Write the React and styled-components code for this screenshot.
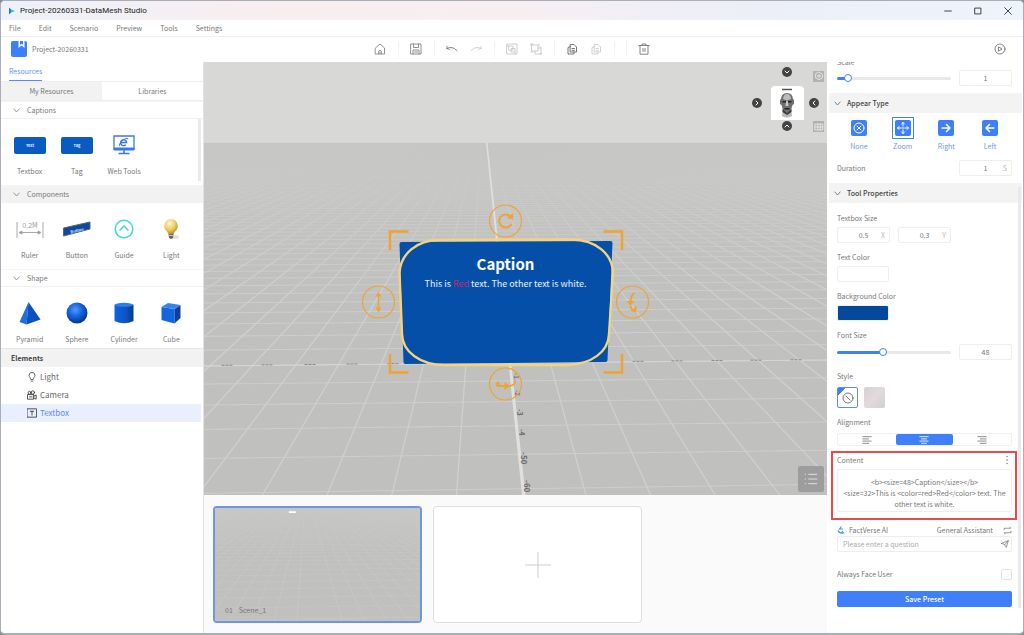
import React, {useState} from 'react'
import styled, {createGlobalStyle, css} from 'styled-components'

const range = (from, to) => Array.from({length: to - from + 1}, (_, i) => from + i)

const App = () => {
  return (
    <>
      <GlobalStyle />
      <Window>
        <TitleBar>
          <AppMark />
          <h1>Project-20260331-DataMesh Studio</h1>
          <WindowButtons>
            <button aria-label='Minimize'><Icon d='M2 6H10' size={10} color='#222' /></button>
            <button aria-label='Maximize'><Icon d='M2.5 2.5H9.5V9.5H2.5Z' size={10} color='#222' /></button>
            <button aria-label='Close'><Icon d='M2 2L10 10M10 2L2 10' size={10} color='#222' /></button>
          </WindowButtons>
        </TitleBar>
        <MenuBar>
          {['File', 'Edit', 'Scenario', 'Preview', 'Tools', 'Settings'].map(name => (
            <button key={name}>{name}</button>
          ))}
        </MenuBar>
        <Toolbar />
        <Body>
          <Sidebar />
          <Center>
            <Viewport />
            <SceneStrip />
          </Center>
          <Properties />
        </Body>
      </Window>
    </>
  )
}

const Icon = ({d, size = 12, color = '#777', fill = 'none', width = 1, children}) => (
  <svg width={size} height={size} viewBox='0 0 12 12' fill={fill} stroke={color} strokeWidth={width} strokeLinejoin='round' strokeLinecap='round' aria-hidden='true'>
    {d && <path d={d} />}
    {children}
  </svg>
)

const AppMark = () => (
  <svg width='8' height='8' viewBox='0 0 8 8' aria-hidden='true'>
    <path d='M1 0.5L3.2 2.6V5.4L1 7.5Z' fill='#1f7fc4' />
    <path d='M3.2 2.6L7 4L3.2 5.6Z' fill='#35c0c8' />
  </svg>
)

/* ---------- toolbar ---------- */

const Toolbar = () => (
  <ToolRow>
    <Project>
      <svg width='16' height='16' viewBox='0 0 16 16' aria-hidden='true'>
        <rect width='16' height='16' rx='2' fill='#3b7ffb' />
        <path d='M7.5 0H13.5V7L10.5 4.6L7.5 7Z' fill='#fff' />
        <path d='M9 0H12V3.8L10.5 2.7L9 3.8Z' fill='#3b7ffb' />
      </svg>
      Project-20260331
    </Project>
    <Tools>
      <button aria-label='Home'>
        <Icon d='M1.5 5L6 1L10.5 5V11H1.5ZM4.7 11V8Q6 6.6 7.3 8V11M6 9.3V10' width={0.8} />
      </button>
      <i />
      <button aria-label='Save'>
        <Icon d='M1 1H11V11H1ZM3.5 1V4.5H8.5V1M3 11V7H9V11M4.5 9H7.5' width={0.8} />
      </button>
      <i />
      <button aria-label='Undo'>
        <Icon d='M1 5.5Q6 2.500 11 7.500M1 5.5V3.500M1 5.5L3.400 6.3' width={0.9} />
      </button>
      <button aria-label='Redo' disabled>
        <Icon d='M11 5.5Q6 2.500 1 7.500M11 5.5V3.500M11 5.5L8.600 6.3' color='#ccc' width={0.9} />
      </button>
      <i />
      <button aria-label='Group' disabled>
        <Icon d='M1 1H11V11H1ZM3 3H7V7H3ZM5.5 5.5H9V9H5.5ZM1 3H3M9 11V9' color='#c2c2c2' width={0.8} />
      </button>
      <button aria-label='Ungroup' disabled>
        <Icon d='M2 2H8V8H2ZM8 5H11V11H5V8M1 1V3M1 1H3M9 1V3M1 9H3M11 4V5M12 11H10' color='#c2c2c2' width={0.8} />
      </button>
      <i />
      <button aria-label='Copy'>
        <Icon d='M4.500 1.500H8L10.5 4V9H4.500ZM4.500 3.500L2 4.500V11H8V9M6 5.500H8.5M6 7.300H8.5' color='#666' width={0.9} />
      </button>
      <button aria-label='Paste' disabled>
        <Icon d='M4.500 1.500H8L10.5 4V9H4.500ZM4.500 3.500L2 4.500V11H8V9M6 5.500H8.5M6 7.300H8.5' color='#ccc' width={0.9} />
      </button>
      <i />
      <i />
      <button aria-label='Delete'>
        <Icon d='M0.8 2.5H11.2M4 2.5V1H8V2.5M2 2.5V11.2H10V2.5M5 5.5V8.5M7 5.5V8.5' width={0.9} />
      </button>
    </Tools>
    <Play aria-label='Play'>
      <Icon color='#666' width={0.8}>
        <circle cx='6' cy='6' r='5' />
        <path d='M4.8 4L8 6L4.8 8Z' />
      </Icon>
    </Play>
  </ToolRow>
)

/* ---------- left column ---------- */

const Chevron = ({color = '#777'}) => <Icon d='M2.5 4L6 8L9.5 4' size={9} color={color} />

const Plate = ({text}) => (
  <svg width='32' height='17' viewBox='0 0 32 17' aria-hidden='true'>
    <rect width='32' height='17' rx='2' fill='#0a5bc0' />
    <text x='16' y='10' fontSize='4' fontWeight='bold' textAnchor='middle' fill='#dbe9ff'>{text}</text>
  </svg>
)

const captions = [
  ['Textbox', <Plate text='Text' />],
  ['Tag', <Plate text='Tag' />],
  ['Web Tools', (
    <svg width='22' height='20' viewBox='0 0 22 20' fill='none' stroke='#3a78ea'>
      <path d='M1 1H21V14H1Z' strokeWidth='1.3' />
      <path d='M1 13H21V15H1Z' fill='#3a78ea' />
      <path d='M11 15V18M5.500 18.500H16.500' strokeWidth='1.6' />
      <path d='M8 7.500H13.600A3 3 0 1 0 12.800 9.700' strokeWidth='1.4' />
      <path d='M7.200 10.500C5.500 11.500 6 9 9 6C12 3.200 15.500 2.500 14.800 4.500' strokeWidth='1' />
    </svg>
  )],
]

const components = [
  ['Ruler', (
    <svg width='28' height='18' viewBox='0 0 28 18' stroke='#aaa' fill='none'>
      <path d='M1 2V18M27 2V18M3 12.500H25' />
      <path d='M3 12.500L6 11V14ZM25 12.500L22 11V14Z' fill='#888' />
      <text x='14' y='8' fontSize='7' textAnchor='middle' fill='#999' stroke='none'>0.2M</text>
    </svg>
  )],
  ['Button', (
    <svg width='28' height='16' viewBox='0 0 28 16'>
      <path d='M0.500 7L27 1V8L0.500 15Z' fill='#0c4aa0' stroke='#5c6470' />
      <text x='14' y='11' fontSize='4' fontWeight='bold' textAnchor='middle' fill='#cfe0ff' transform='rotate(-13 14 9)'>Button</text>
    </svg>
  )],
  ['Guide', (
    <svg width='20' height='20' viewBox='0 0 20 20' fill='none' stroke='#3fd9cd'>
      <circle cx='10' cy='10' r='8.800' strokeWidth='1.5' />
      <path d='M5.500 11.500L10 7L14.500 11.500' strokeWidth='1.5' />
    </svg>
  )],
  ['Light', (
    <svg width='18' height='22' viewBox='0 0 18 22'>
      <defs>
        <radialGradient id='bulb' cx='0.4' cy='0.3' r='0.7'>
          <stop offset='0' stopColor='#fff6c8' />
          <stop offset='0.6' stopColor='#eacb62' />
          <stop offset='1' stopColor='#b98f2c' />
        </radialGradient>
      </defs>
      <ellipse cx='12' cy='19' rx='5' ry='2' fill='#e4e0d4' />
      <path d='M9 1A7 7 0 0 0 5 13.500L6.500 16H11.500L13 13.500A7 7 0 0 0 9 1Z' fill='url(#bulb)' />
      <path d='M6.500 16H11.500L11 20L9 21L7 20Z' fill='#6d675c' />
      <path d='M6.500 17.500H11.500' stroke='#c8c2b2' />
    </svg>
  )],
]

const shapes = [
  ['Pyramid', (
    <svg width='22' height='24' viewBox='0 0 22 24'>
      <path d='M9.500 1L0.500 21L7.500 23.500Z' fill='#1f6fe0' />
      <path d='M9.500 1L7.500 23.500L21.500 18.500Z' fill='#0b52c0' />
    </svg>
  )],
  ['Sphere', (
    <svg width='22' height='22' viewBox='0 0 22 22'>
      <defs>
        <radialGradient id='ball' cx='0.42' cy='0.35' r='0.62'>
          <stop offset='0' stopColor='#4d9bff' />
          <stop offset='0.55' stopColor='#1161dc' />
          <stop offset='1' stopColor='#083a90' />
        </radialGradient>
      </defs>
      <circle cx='11' cy='11' r='10.500' fill='url(#ball)' />
    </svg>
  )],
  ['Cylinder', (
    <svg width='20' height='22' viewBox='0 0 20 22'>
      <defs>
        <linearGradient id='tube'>
          <stop offset='0' stopColor='#1163dc' />
          <stop offset='0.6' stopColor='#0d54c4' />
          <stop offset='1' stopColor='#083a8c' />
        </linearGradient>
      </defs>
      <path d='M0.500 3V19Q10 23.500 19.500 19V3Z' fill='url(#tube)' />
      <ellipse cx='10' cy='2.800' rx='9.500' ry='2' fill='#2b7df0' />
    </svg>
  )],
  ['Cube', (
    <svg width='20' height='22' viewBox='0 0 20 22'>
      <path d='M0.500 5L13.500 7V21.500L0.500 18Z' fill='#1465de' />
      <path d='M13.500 7L19.500 3V16L13.500 21.500Z' fill='#0a419c' />
      <path d='M0.500 5L7 1L19.500 3L13.500 7Z' fill='#3384f2' />
    </svg>
  )],
]

const elements = [
  ['Light', <Icon size={10} color='#444' d='M4.500 8.500C4.500 7 2.500 6.500 2.500 4A3.500 3.500 0 0 1 9.500 4C9.500 6.500 7.500 7 7.500 8.500ZM5 11H7' />],
  ['Camera', (
    <Icon size={10} color='#333'>
      <path d='M1 5.500H8V11H1ZM8 7.500L11 6V11L8 9.500M3 8.200H6' />
      <circle cx='3' cy='3.300' r='1.700' />
      <circle cx='7' cy='3' r='2' />
    </Icon>
  )],
  ['Textbox', <Icon size={10} color='#333' d='M0.500 1H11.500V11H0.500ZM4 4H8M6 4V8.500' />],
]

const Section = ({title, items, shaded, compact}) => (
  <section>
    <SectionHead $shaded={shaded}><Chevron />{title}</SectionHead>
    <ItemGrid $compact={compact}>
      {items.map(([name, art]) => (
        <Item key={name}>
          <span>{art}</span>
          {name}
        </Item>
      ))}
    </ItemGrid>
  </section>
)

const Sidebar = () => {
  const [selected, setSelected] = useState('Textbox')

  return (
    <Left>
      <PanelTab><button>Resources</button></PanelTab>
      <Tabs role='tablist'>
        <Tab role='tab' aria-selected='true' $active>My Resources</Tab>
        <Tab role='tab' aria-selected='false'>Libraries</Tab>
      </Tabs>
      <Library>
        <Section title='Captions' items={captions} />
        <Section title='Components' items={components} shaded />
        <Section title='Shape' items={shapes} compact />
        <Thumb $top={18} $length={62} />
      </Library>
      <TreeHead>Elements</TreeHead>
      <Tree>
        {elements.map(([name, icon]) => (
          <li key={name}>
            <TreeRow $active={name === selected} onClick={() => setSelected(name)}>{icon}{name}</TreeRow>
          </li>
        ))}
      </Tree>
    </Left>
  )
}

/* ---------- 3D view ---------- */

// floor grid seen in perspective, the eye line is above the far edge
const VP = {x: 280, y: 54}
const floorY = n => VP.y + 1 / (0.004 + 0.00027 * n)
const rows = range(-6, 70).map(floorY)
const cols = range(-62, 72).filter(k => k !== 0).map(k => 317.7 + 64.7 * k)
const marks = [[312, 315, '-1'], [313, 332, '-2'], [315, 351, '-3'], [317, 371, '-4'], [319, 394, '-50'], [322, 422, '-60']]
const axisMarks = [24, 64, 107, 149, 190, 435, 474, 514, 553, 593]

const Floor = ({id}) => (
  <g>
    <defs>
      <linearGradient id={id} x1='0' y1='0' x2='0' y2='1'>
        <stop offset='0' stopColor='#c6c6c5' />
        <stop offset='0.12' stopColor='#c6c6c5' stopOpacity='0.7' />
        <stop offset='0.45' stopColor='#c4c4c3' stopOpacity='0' />
      </linearGradient>
      <clipPath id={id + 'clip'}><rect y='81' width='624' height='353' /></clipPath>
    </defs>
    <rect width='624' height='434' fill='#d8d8d7' />
    <rect y='81' width='624' height='353' fill='#c0c0bf' />
    <g clipPath={`url(#${id}clip)`} stroke='#d0d0cf'>
      {cols.map(x => <path key={x} d={`M${VP.x} ${VP.y}L${x} 433`} strokeWidth='1.2' />)}
      {rows.map(y => <path key={y} d={`M0 ${y}L624 ${y - (y - VP.y) * 0.024}`} strokeWidth='0.8' />)}
      <rect y='81' width='624' height='353' fill={`url(#${id})`} stroke='none' />
    </g>
  </g>
)

const Handle = ({x, y, children}) => (
  <g transform={`translate(${x} ${y})`} fill='none' stroke='#f0a32f' strokeWidth='1.2'>
    <circle r='16' />
    {children}
  </g>
)

const Viewport = () => (
  <View>
    <Canvas viewBox='0 0 624 433' preserveAspectRatio='xMidYMid slice' role='img' aria-label='Scene view'>
      <Floor id='far' />
      <path d='M282.500 81L284 81L322 433H318.500Z' fill='#e0e0df' />
      <path d='M0 304L624 298' stroke='#d6d6d5' />
      {axisMarks.map(x => (
        <path key={x} d={`M${x - 6} ${303.500 - x * 0.0096}H${x + 6}`} stroke='#8a8a8a' strokeWidth='1' strokeDasharray='3 1' />
      ))}
      {marks.map(([x, y, label], i) => (
        <text key={label} transform={`translate(${x - 2} ${y - 4}) rotate(90)`} fontSize={6 + Math.floor(i / 2)} fontWeight='bold' fill='#6d6d6d'>{label}</text>
      ))}
      <path d='M198 180L407 179Q409 179 409 181L404 298Q404 300 402 300L202 302Q200 302 200 300L196 182Q196 180 198 180Z' fill='#064fa8' />
      <path
        d='M236 178L368 177.500C393 178 409 192 409.500 211L405.500 272C405 290 388 302 364 303H241C217 303 199 290 198.500 272L196 211C197 192 213 178 236 178Z'
        fill='none' stroke='#f5d27c' strokeWidth='2.4'
      />
      <text x='302' y='208' fontSize='15' fontWeight='bold' textAnchor='middle' fill='#fff'>Caption</text>
      <text x='302' y='225' fontSize='9' textAnchor='middle' fill='#eaf1ff'>
        This is <tspan fill='#c4286c'>Red</tspan> text. The other text is white.
      </text>
      <path
        d='M205 169.500H186.500V188M400 169.500H418.500V188M205 310.500H186.500V292M400 310.500H418.500V292'
        fill='none' stroke='#f0a32f' strokeWidth='2.500'
      />
      <Handle x={302} y={159}>
        <path d='M5 -4.500A6.500 6.500 0 1 0 6 3' strokeWidth='2' />
        <path d='M7.500 -8V-1.500L1.500 -3Z' fill='#f0a32f' stroke='none' />
      </Handle>
      <Handle x={175} y={240}>
        <path d='M0 -7V7' strokeWidth='1.600' />
        <path d='M-3 -5.500L0 -10.500L3 -5.500ZM-3 5.500L0 10.500L3 5.500Z' fill='#f0a32f' stroke='none' />
      </Handle>
      <Handle x={429} y={240}>
        <path d='M2 -9Q-2 -6 -2 0M-2 4Q-1 8 1 9' strokeWidth='1.800' />
        <path d='M-6 -1H2L-2 4ZM4 4V10.500L-1.500 9Z' fill='#f0a32f' stroke='none' />
      </Handle>
      <Handle x={302} y={322}>
        <path d='M-8 -1Q-10 2 -7 2H0M9 -4Q11 1 4 2' strokeWidth='1.800' />
        <path d='M-1 -2V6L5 2ZM-10.500 0L-7 -3L-5 1Z' fill='#f0a32f' stroke='none' />
      </Handle>
    </Canvas>
    <Gizmo>
      <Arrow $area='up' aria-label='Top view'><Icon d='M3 4.500L6 7.500L9 4.500' size={8} color='#fff' width={1.5} /></Arrow>
      <Arrow $area='left' aria-label='Left view'><Icon d='M4.500 3L7.500 6L4.500 9' size={8} color='#fff' width={1.5} /></Arrow>
      <Head>
        <svg width='18' height='30' viewBox='0 0 18 30'>
          <path d='M4 1.500H14' stroke='#555' strokeWidth='1.500' />
          <path d='M5 20H13L14 28Q9 31 4 28Z' fill='#b7b7b7' />
          <path d='M9 5Q14.500 5 15 11L16 12V16L14.500 17L13 22L9 25L5 22L3.500 17L2 16V12L3 11Q3.500 5 9 5Z' fill='#6f6f6f' />
          <path d='M9 6Q12.500 6 13 11L9 12.500L5 11Q5.500 6 9 6Z' fill='#bcbcbc' />
          <path d='M4.500 13H8V14.500H4.500ZM10 13H13.500V14.500H10ZM6.500 20H11.500V21.500H6.500Z' fill='#222' />
          <path d='M8.200 13H9.800L10.500 18H7.500Z' fill='#c9c9c9' />
          <path d='M4.500 21L9 25L13.500 21V24L9 27L4.500 24Z' fill='#3a3a3a' />
        </svg>
      </Head>
      <Arrow $area='right' aria-label='Right view'><Icon d='M7.500 3L4.500 6L7.500 9' size={8} color='#fff' width={1.5} /></Arrow>
      <Arrow $area='down' aria-label='Bottom view'><Icon d='M3 7.500L6 4.500L9 7.500' size={8} color='#fff' width={1.5} /></Arrow>
      <Corner $area='cube' aria-label='Projection'>
        <Icon size={10} color='#eee' d='M6 1.500L10 3.700V8.300L6 10.500L2 8.300V3.700ZM6 4V8M4 6H8' />
      </Corner>
      <Corner $area='grid' aria-label='Grid'>
        <Icon size={10} color='#eee' d='M1.500 2.500H10.500V9.500H1.500ZM1.500 6H10.500M4.500 2.500V9.500M7.500 2.500V9.500' />
      </Corner>
    </Gizmo>
    <ListButton aria-label='List'>
      <Icon size={14} color='#e4e4e4' width={0.8} d='M1 2H1.300M4 2H11M1 6H1.300M4 6H11M1 10H1.300M4 10H11' />
    </ListButton>
  </View>
)

const SceneStrip = () => (
  <Strip>
    <SceneCard $active>
      <Canvas viewBox='0 110 624 323' preserveAspectRatio='xMidYMid slice'>
        <Floor id='thumb' />
        <path d='M230 122H250' stroke='#fff' strokeWidth='5' />
      </Canvas>
      <SceneName><span>01</span><span>Scene_1</span></SceneName>
    </SceneCard>
    <SceneCard aria-label='Add scene'>
      <svg width='28' height='28' viewBox='0 0 28 28' stroke='#ccc'><path d='M14 1V27M1 14H27' /></svg>
    </SceneCard>
  </Strip>
)

/* ---------- right column ---------- */

const appear = [
  ['None', <><circle cx='6' cy='6' r='5' /><path d='M4 4L8 8M8 4L4 8' /></>],
  ['Zoom', <path d='M6 0.500V4M6 11.500V8M0.500 6H4M11.500 6H8M4.500 2L6 0.500L7.500 2M4.500 10L6 11.500L7.500 10M2 4.500L0.500 6L2 7.500M10 4.500L11.500 6L10 7.500M5 6H7' />],
  ['Right', <path d='M2 6H10M6.500 2.500L10 6L6.500 9.500' strokeWidth='1.500' />],
  ['Left', <path d='M10 6H2M5.500 2.500L2 6L5.500 9.500' strokeWidth='1.500' />],
]

const aligns = [
  ['Left', 'M1 2H11M1 4.700H8M1 7.300H11M1 10H8'],
  ['Center', 'M1 2H11M3 4.700H9M1 7.300H11M3 10H9'],
  ['Right', 'M1 2H11M4 4.700H11M1 7.300H11M4 10H11'],
]

const contentText = '<b><size=48>Caption</size></b>\n<size=32>This is <color=red>Red</color> text. The other text is white.'

const Properties = () => {
  const [scale, setScale] = useState(7)
  const [fontSize, setFontSize] = useState(40)
  const [mode, setMode] = useState('Zoom')
  const [align, setAlign] = useState('Center')

  return (
    <Right>
      <ScaleGroup>
        <Label htmlFor='scale'>Scale</Label>
        <Row>
          <Slider id='scale' type='range' value={scale} $fill={scale} onChange={e => setScale(+e.target.value)} />
          <Box><input aria-label='Scale value' defaultValue='1' /></Box>
        </Row>
      </ScaleGroup>

      <PropHead><Chevron color='#555' />Appear Type</PropHead>
      <AppearRow>
        {appear.map(([name, art]) => (
          <AppearButton key={name} $active={mode === name} onClick={() => setMode(name)}>
            <span><i><Icon color='#fff' width={1}>{art}</Icon></i></span>
            {name}
          </AppearButton>
        ))}
      </AppearRow>
      <DurationRow>
        <Label htmlFor='duration'>Duration</Label>
        <Box><input id='duration' defaultValue='1' /><em>S</em></Box>
      </DurationRow>

      <PropHead><Chevron color='#555' />Tool Properties</PropHead>
      <Fields>
        <Field>
          <Label htmlFor='sizex'>Textbox Size</Label>
          <Row>
            <Box><input id='sizex' defaultValue='0.5' /><em>X</em></Box>
            <Box><input aria-label='Textbox height' defaultValue='0.3' /><em>Y</em></Box>
          </Row>
        </Field>
        <Field>
          <Label as='span'>Text Color</Label>
          <Swatch aria-label='Text Color' $color='#fff' />
        </Field>
        <Field>
          <Label as='span'>Background Color</Label>
          <Swatch aria-label='Background Color' $color='#04499a' />
        </Field>
        <Field $space={10}>
          <Label htmlFor='fontsize'>Font Size</Label>
          <Row>
            <Slider id='fontsize' type='range' value={fontSize} $fill={fontSize} onChange={e => setFontSize(+e.target.value)} />
            <Box><input aria-label='Font size value' defaultValue='48' /></Box>
          </Row>
        </Field>
        <Field $gap={5}>
          <Label as='span'>Style</Label>
          <Styles>
            <StyleTile aria-label='No style' $active>
              <Icon color='#555' width={0.8}><circle cx='6' cy='6' r='5' /><path d='M4 4L8 8' /></Icon>
            </StyleTile>
            <StyleTile aria-label='Glass' />
          </Styles>
        </Field>
        <Field $gap={5} $space={5}>
          <Label as='span'>Alignment</Label>
          <Segments>
            {aligns.map(([name, d]) => (
              <Segment key={name} aria-label={name} $active={align === name} onClick={() => setAlign(name)}>
                <Icon size={10} d={d} color={align === name ? '#fff' : '#777'} />
              </Segment>
            ))}
          </Segments>
        </Field>
      </Fields>

      <ContentBox>
        <div>
          <Label htmlFor='content'>Content</Label>
          <button aria-label='More'>
            <Icon size={10} color='#333' fill='#333' width={0.5} d='M6 1.500H6.500V2H6ZM6 5.700H6.500V6.200H6ZM6 10H6.500V10.500H6Z' />
          </button>
        </div>
        <textarea id='content' defaultValue={contentText} spellCheck='false' />
      </ContentBox>

      <Assistant>
        <div>
          <svg width='8' height='8' viewBox='0 0 8 8' fill='none' stroke='#3a9be0' strokeWidth='1.200'>
            <path d='M4.500 0.500L2.500 3H6M1 4.500Q2 7.500 6.500 7L5 5' />
          </svg>
          <b>FactVerse AI</b>
          <button>
            General Assistant
            <Icon size={9} color='#777' d='M1.500 5V3H10.500L9 1.500M10.500 7V9H1.500L3 10.500' />
          </button>
        </div>
        <Ask>
          <input aria-label='Question' placeholder='Please enter a question' />
          <button aria-label='Send'><Icon size={8} color='#666' d='M1 5L11 1L8 11L5.500 7Z M5.500 7L11 1' /></button>
        </Ask>
      </Assistant>

      <FaceRow>
        <label htmlFor='face'>Always Face User</label>
        <input id='face' type='checkbox' />
      </FaceRow>
      <SaveButton>Save Preset</SaveButton>
      <Thumb $top={125} $length={421} />
    </Right>
  )
}

export default App

/* ---------- styles ---------- */

const GlobalStyle = createGlobalStyle`
  *{
    box-sizing: border-box;
  }
  body{
    margin: 0;
    background: #7f8f96;
    color: #777;
    font: 7px/12px "Noto Sans CJK SC", "Noto Sans", sans-serif;
  }
  button, input, textarea{
    font: inherit;
    color: inherit;
    margin: 0;
    padding: 0;
    border: 0;
    background: none;
    outline: none;
  }
  button{
    cursor: pointer;
  }
  svg{
    display: block;
    flex: none;
  }
`

const Window = styled.div`
  min-height: 100vh;
  display: flex;
  flex-direction: column;
  border: 1px solid #a9afb8;
  border-bottom-width: 2px;
  border-radius: 5px;
  background: #fff;
  overflow: hidden;
`

const TitleBar = styled.header`
  height: 19px;
  padding-left: 7px;
  display: flex;
  align-items: center;
  gap: 4px;
  background: linear-gradient(90deg, #eef1f8, #f8eef0 28%, #f6eff2 50%, #eceff8 75%, #eef4fb);

  h1{
    margin: 0;
    color: #222;
    font: 8px/12px Roboto, "Noto Sans", sans-serif;
  }
`

const WindowButtons = styled.div`
  margin-left: auto;
  padding-right: 10px;
  display: flex;
  gap: 20px;
`

const MenuBar = styled.nav`
  height: 17px;
  padding-left: 8px;
  display: flex;
  align-items: center;
  gap: 18px;
  border-bottom: 1px solid #eee;
`

const ToolRow = styled.div`
  height: 25px;
  padding: 0 10px 1px;
  display: grid;
  grid-template-columns: 1fr auto 1fr;
  align-items: center;
`

const Project = styled.div`
  display: flex;
  align-items: center;
  gap: 5px;
`

const Tools = styled.div`
  display: flex;
  align-items: center;
  gap: 11px;

  button{
    width: 13px;
  }
  i{
    width: 1px;
    height: 16px;
    background: #f1f1f1;
  }
`

const Play = styled.button`
  justify-self: end;
  padding-right: 7px;
`

const Body = styled.main`
  flex: 1;
  display: grid;
  grid-template-columns: 203px minmax(0, 1fr) 196px;
`

const Left = styled.aside`
  border-right: 1px solid #e2e2e2;
`

const PanelTab = styled.div`
  height: 20px;
  padding: 2px 0 0 8px;
  border-bottom: 1px solid #eee;

  button{
    height: 17px;
    padding-bottom: 2px;
    color: #6a93ee;
    border-bottom: 1px solid #5b8af0;
  }
`

const Tabs = styled.div`
  display: grid;
  grid-template-columns: 1fr 1fr;
  border-bottom: 1px solid #eee;
`

const Tab = styled.button`
  height: 18px;
  background: ${({$active}) => $active ? '#f2f2f2' : '#fff'};
`

const Library = styled.div`
  position: relative;
`

const SectionHead = styled.h2`
  height: 18px;
  margin: 0;
  padding-left: 11px;
  display: flex;
  align-items: center;
  gap: 6px;
  font-size: 7px;
  font-weight: normal;
  border-top: 1px solid #f4f4f4;
  border-bottom: 1px solid #f0f0f0;
  background: ${({$shaded}) => $shaded ? '#f2f2f2' : '#fff'};
`

const ItemGrid = styled.div`
  padding: 14px 8px ${({$compact}) => $compact ? '3px' : '8px'} 5px;
  display: grid;
  grid-template-columns: repeat(4, 1fr);
`

const Item = styled.button`
  display: flex;
  flex-direction: column;
  align-items: center;
  gap: 8px;
  white-space: nowrap;

  span{
    height: 24px;
    display: flex;
    align-items: center;
  }
`

const Thumb = styled.div`
  position: absolute;
  top: ${({$top}) => $top}px;
  right: 2px;
  width: 3px;
  height: ${({$length}) => $length}px;
  background: #e9e9e9;
`

const TreeHead = styled.h2`
  height: 19px;
  margin: 0;
  padding-left: 10px;
  font-size: 7px;
  line-height: 18px;
  color: #444;
  background: #f2f2f2;
  border-top: 1px solid #e6e6e6;
`

const Tree = styled.ul`
  margin: 0;
  padding: 1px 2px 0 0;
  list-style: none;
`

const TreeRow = styled.button`
  width: 100%;
  height: 18px;
  padding-left: 26px;
  display: flex;
  align-items: center;
  gap: 3px;
  font-size: 8px;
  color: ${({$active}) => $active ? '#5f8bea' : '#666'};
  background: ${({$active}) => $active ? '#e9effc' : 'none'};
`

const Center = styled.div`
  display: flex;
  flex-direction: column;
`

const View = styled.div`
  flex: 1;
  position: relative;
  overflow: hidden;
  background: #c2c2c1;
`

const Canvas = styled.svg`
  position: absolute;
  inset: 0;
  width: 100%;
  height: 100%;
`

const Gizmo = styled.div`
  position: absolute;
  top: 5px;
  right: 3px;
  display: grid;
  grid-template: ". up cube" 18px "left head right" 36px ". down grid" 12px / 18px 34px 20px;
  justify-items: center;
`

const Arrow = styled.button`
  grid-area: ${({$area}) => $area};
  width: 10px;
  height: 10px;
  align-self: ${({$area}) => $area === 'up' || $area === 'down' ? 'start' : 'center'};
  justify-self: ${({$area}) => $area === 'left' ? 'start' : 'center'};
  display: grid;
  place-items: center;
  border-radius: 50%;
  background: #444;
`

const Head = styled.div`
  grid-area: head;
  width: 33px;
  height: 34px;
  display: grid;
  place-items: center;
  align-self: center;
  border-radius: 4px 4px 1px 1px;
  background: #fff;
`

const Corner = styled.button`
  grid-area: ${({$area}) => $area};
  width: 11px;
  height: 11px;
  align-self: ${({$area}) => $area === 'cube' ? 'center' : 'start'};
  justify-self: end;
  display: grid;
  place-items: center;
  background: #b2b2b1;
`

const ListButton = styled.button`
  position: absolute;
  right: 3px;
  bottom: 3px;
  width: 26px;
  height: 26px;
  display: grid;
  place-items: center;
  border-radius: 2px;
  background: #9d9d9d;
`

const Strip = styled.div`
  padding: 11px 9px 10px;
  display: flex;
  gap: 11px;
  background: #fafafa;
`

const SceneCard = styled.button`
  position: relative;
  flex: 0 1 209px;
  height: 117px;
  display: grid;
  place-items: center;
  border: 1px solid #ddd;
  border-radius: 4px;
  background: #fff;
  overflow: hidden;

  ${({$active}) => $active && css`
    border: 2px solid #6f96e6;
    background: #c2c2c1;
  `}
`

const SceneName = styled.span`
  position: relative;
  place-self: end start;
  padding: 0 0 5px 10px;
  display: flex;
  gap: 6px;
`

const Right = styled.aside`
  position: relative;
  padding-left: 2px;
  overflow: hidden;
`

const Label = styled.label`
  display: block;
  white-space: nowrap;
`

const Row = styled.div`
  display: flex;
  align-items: center;
  gap: 8px;
`

// the panel is scrolled, so only the foot of this label shows
const ScaleGroup = styled.div`
  margin-top: -6px;
  padding: 0 11px 7px 8px;

  ${Row}{
    margin-top: 2px;
  }
`

const Box = styled.div`
  position: relative;
  flex: none;
  width: 53px;
  height: 16px;
  border: 1px solid #eee;
  border-radius: 2px;

  input{
    width: 100%;
    height: 100%;
    text-align: center;
  }
  em{
    position: absolute;
    top: 1px;
    right: 4px;
    font-style: normal;
    color: #bbb;
  }
`

const Slider = styled.input`
  flex: 1;
  min-width: 0;
  height: 10px;
  appearance: none;

  &::-webkit-slider-runnable-track{
    height: 3px;
    border-radius: 2px;
    background: linear-gradient(90deg, #447fee ${({$fill}) => $fill}%, #e8e8e8 ${({$fill}) => $fill}%);
  }
  &::-webkit-slider-thumb{
    appearance: none;
    width: 8px;
    height: 8px;
    margin-top: -3px;
    border: 1px solid #447fee;
    border-radius: 50%;
    background: #fff;
  }
`

const PropHead = styled.h2`
  height: 20px;
  margin: 0 1px 0 0;
  padding-left: 4px;
  display: flex;
  align-items: center;
  gap: 5px;
  font-size: 7px;
  font-weight: 500;
  color: #444;
  background: #f3f3f3;
`

const AppearRow = styled.div`
  padding: 4px 11px 8px 8px;
  display: grid;
  grid-template-columns: repeat(4, 1fr);
`

const AppearButton = styled.button`
  display: flex;
  flex-direction: column;
  align-items: center;
  gap: 1px;
  color: #6f97ef;

  span{
    padding: 2px;
    border: 1px solid ${({$active}) => $active ? '#447fee' : 'transparent'};
  }
  i{
    width: 16px;
    height: 16px;
    display: grid;
    place-items: center;
    border-radius: 2px;
    background: #3f80fa;
  }
`

const DurationRow = styled.div`
  padding: 0 11px 7px 8px;
  display: flex;
  align-items: center;
  justify-content: space-between;
`

const Fields = styled.div`
  padding: 9px 11px 0 8px;
`

const Field = styled.div`
  margin-bottom: ${({$space = 8}) => $space}px;

  > :last-child{
    margin-top: ${({$gap = 3}) => $gap}px;
  }
`

const Swatch = styled.button`
  display: block;
  width: 52px;
  height: 16px;
  border: 1px solid #eee;
  border-radius: 2px;
  background: ${({$color}) => $color};
`

const Styles = styled.div`
  display: flex;
  gap: 6px;
`

const StyleTile = styled.button`
  width: 21px;
  height: 21px;
  display: grid;
  place-items: center;
  border-radius: 2px;
  background: linear-gradient(135deg, #d4d2d4, #e2dadb 50%, #cfcfd1);

  ${({$active}) => $active && css`
    border: 1px solid #5a8cf0;
    background: linear-gradient(135deg, #3f80fa 5px, #fff 5px);
  `}
`

const Segments = styled.div`
  display: grid;
  grid-template-columns: repeat(3, 1fr);
  border: 1px solid #f0f0f0;
  border-radius: 2px;
`

const Segment = styled.button`
  height: 11px;
  display: grid;
  place-items: center;
  border-radius: 2px;
  background: ${({$active}) => $active ? '#3f80fa' : 'none'};
`

const ContentBox = styled.div`
  margin: 0 6px 0 2px;
  padding: 1px 3px 6px 4px;
  border: 2px solid #e8494d;

  div{
    display: flex;
    justify-content: space-between;
    align-items: center;
  }
  textarea{
    display: block;
    width: 100%;
    height: 43px;
    margin-top: 3px;
    padding: 7px 2px 0;
    line-height: 11px;
    text-align: center;
    border: 1px solid #eee;
    border-radius: 2px;
    resize: none;
    overflow: hidden;
  }
`

const Assistant = styled.div`
  padding: 4px 11px 0 8px;

  > div:first-child{
    display: flex;
    align-items: center;
    gap: 4px;
  }
  b{
    font-weight: normal;
  }
  > div > button{
    display: flex;
    align-items: center;
    gap: 10px;
    margin-left: auto;
  }
`

const Ask = styled.div`
  height: 16px;
  padding: 0 2px 0 5px;
  display: flex;
  align-items: center;
  border: 1px solid #eee;
  border-radius: 2px;

  input{
    flex: 1;
    min-width: 0;
  }
  input::placeholder{
    color: #aaa;
  }
`

const FaceRow = styled.div`
  padding: 16px 11px 11px 8px;
  display: flex;
  align-items: center;
  justify-content: space-between;

  input{
    appearance: none;
    width: 11px;
    height: 11px;
    border: 1px solid #e2e2e2;
    border-radius: 2px;
  }
`

const SaveButton = styled.button`
  display: block;
  width: calc(100% - 19px);
  height: 16px;
  margin-left: 8px;
  border-radius: 2px;
  font-weight: 500;
  color: #fff;
  background: #3f80fa;
`
